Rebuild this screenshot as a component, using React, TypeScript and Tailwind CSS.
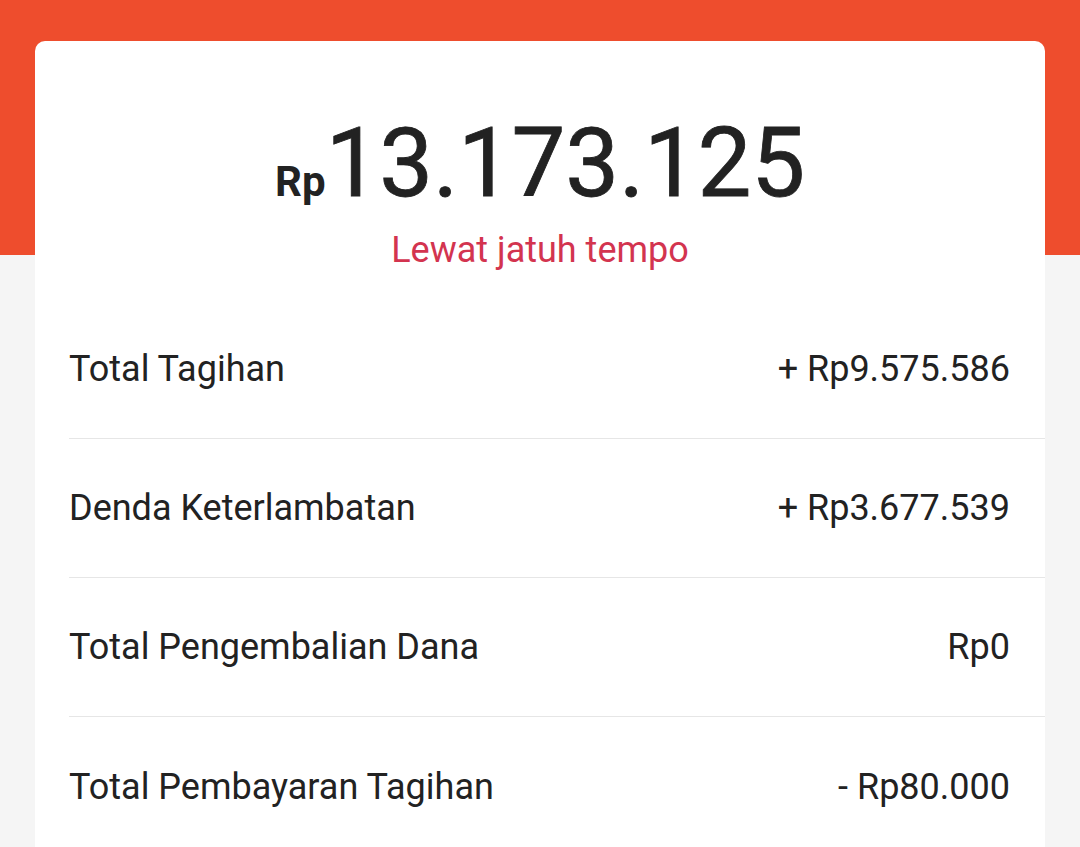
import React from "react";

const rows = [
  { label: "Total Tagihan", value: "+ Rp9.575.586" },
  { label: "Denda Keterlambatan", value: "+ Rp3.677.539" },
  { label: "Total Pengembalian Dana", value: "Rp0" },
  { label: "Total Pembayaran Tagihan", value: "- Rp80.000" },
];

export default function App() {
  return (
    <div
      className="relative min-h-[847px] w-[1080px] overflow-hidden bg-[#f5f5f5]"
      style={{ fontFamily: "Roboto, 'Noto Sans', sans-serif" }}
    >
      <div className="absolute left-0 top-0 h-[255px] w-full bg-[#ee4d2d]" />
      <div className="relative px-[35px] pt-[41px]">
        <div className="rounded-t-[10px] bg-white pb-[40px] text-[#222222]">
          <div className="flex flex-col items-center pt-[74px]">
            <div className="flex items-baseline leading-none">
              <span className="text-[42px] font-bold leading-none">Rp</span>
              <span className="text-[96px] leading-none tracking-[-0.3px] [-webkit-text-stroke:0.8px_#222222]">13.173.125</span>
            </div>
            <div className="mt-[19px] text-[36px] leading-[40px] text-[#d3344f]">
              Lewat jatuh tempo
            </div>
          </div>
          <div className="ml-[34px] mt-[30px]">
            {rows.map((r, i) => (
              <div
                key={r.label}
                className={
                  "flex h-[139px] items-center justify-between pr-[35px] text-[36px] " +
                  (i < rows.length - 1 ? "border-b border-[#e6e6e6]" : "")
                }
              >
                <span>{r.label}</span>
                <span>{r.value}</span>
              </div>
            ))}
          </div>
        </div>
      </div>
    </div>
  );
}
